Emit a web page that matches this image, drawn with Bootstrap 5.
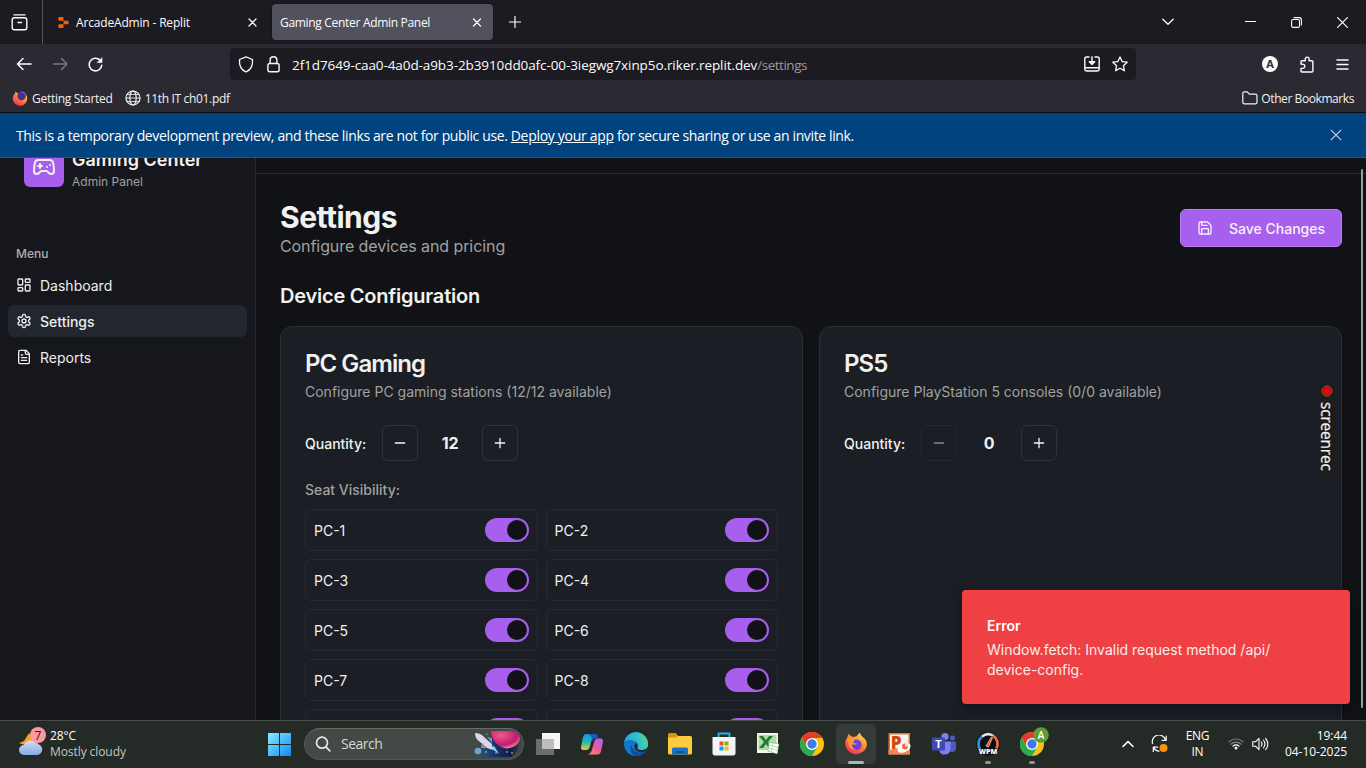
<!DOCTYPE html>
<html lang="en">
<head>
<meta charset="utf-8">
<meta name="viewport" content="width=device-width, initial-scale=1">
<title>Gaming Center Admin Panel</title>
<link href="https://cdn.jsdelivr.net/npm/bootstrap@5.3.0/dist/css/bootstrap.min.css" rel="stylesheet">
<style>
  html, body { height: 100%; overflow: hidden; }
  body { font: 14px/20px Inter, sans-serif; color: #f1f1ef; background: #111216; }
  svg { flex-shrink: 0; display: block; }
  .sys { font-family: "Open Sans", sans-serif; }
  .stroke { fill: none; stroke: currentColor; stroke-linecap: round; stroke-linejoin: round; }
  .baseline-low { padding-top: 2px; }

  /* browser window */
  .titlebar { height: 44px; background: #1c1b22; color: #fbfbfe; font-size: 12px; }
  .tab-manager { width: 43px; height: 44px; border-right: 1px solid #55545c; padding-left: 11px; }
  .win-tab { height: 36px; border-radius: 4px; }
  .win-tab.current { width: 221px; background: #52525e; padding: 0 11px 0 8px; box-shadow: 0 0 3px rgba(0,0,0,.5); }
  .win-tab.other { width: 214px; padding-left: 15px; }
  .toolbar { height: 40px; background: #2b2a33; color: #fbfbfe; }
  .urlbar { width: 906px; height: 32px; background: #1c1b22; border-radius: 4px; font-size: 13.5px; letter-spacing: -.09px; padding: 0 8px; }
  .bookmarks { height: 29px; background: #2b2a33; border-bottom: 1px solid #0c0c0d; font-size: 12px; padding: 0 12px; letter-spacing: -.28px; }
  .account { width: 16px; height: 16px; background: #fbfbfe; color: #2b2a33; font: 700 11px/16px "Open Sans", sans-serif; }

  /* preview notice */
  .notice { height: 45px; background: #00437f; border-bottom: 1px solid #1c5a94; font-size: 14px; letter-spacing: -.37px; padding: 0 24px 0 16px; color: #fff; }

  /* application */
  .app-view { height: 562px; overflow: hidden; }
  .side { width: 256px; background: #16171c; border-right: 1px solid #27292e; }
  .brand { padding: 0 24px; margin-top: -13px; height: 44px; gap: 8px; }
  .brand-logo { width: 40px; height: 40px; border-radius: 6px; background: #a75fee; }
  .brand-name { font-size: 18px; line-height: 28px; font-weight: 600; }
  .soft { color: #a1a19f; }
  .menu-label { font-size: 12px; font-weight: 500; margin: 48px 0 0 8px; height: 32px; padding: 2px 8px 0; color: #aeaeac; }
  .side-link { height: 32px; padding: 0 8px; border-radius: 6px; gap: 8px; color: #eeeeec; }
  .side-link:hover { background: #1d2026; }
  .side-link.current { background: #22262e; font-weight: 500; }
  .page-top { height: 16px; border-bottom: 1px solid #27292e; }
  .page-body { padding: 24px; width: 1110px; }
  .page-title { font-size: 30px; line-height: 34px; font-weight: 700; letter-spacing: -.5px; margin: 0; padding-top: 2px; }
  .page-sub { font-size: 16px; line-height: 24px; letter-spacing: -.08px; }
  .btn-save { width: 162px; height: 38px; border: 1px solid #b97ff1; border-radius: 6px; background: #a75fee; color: #f7f1fd; font-size: 14px; font-weight: 500; padding: 0 16px; gap: 16px; }
  .btn-save:hover { background: #b070f0; color: #fff; }
  .section-title { font-size: 20px; line-height: 28px; font-weight: 600; letter-spacing: -.22px; margin: 24px 0 16px; }
  .device { height: 640px; padding: 24px; border: 1px solid #2b2e35; border-radius: 12px; background: #1b1e25; color: #f1f1ef; }
  .device-title { font-size: 24px; line-height: 24px; font-weight: 600; letter-spacing: -.95px; margin: 1px 0 6px; }
  .qty { height: 36px; margin-top: 23px; gap: 16px; font-weight: 500; }
  .qty b { width: 32px; text-align: center; font-size: 16px; }
  .btn-step { width: 36px; height: 36px; padding: 0; border: 1px solid #2f3237; border-radius: 6px; color: #f1f1ef; }
  .btn-step:disabled { opacity: .5; border-color: #2f3237; color: #f1f1ef; }
  .seats-label { line-height: 24px; margin: 17px 0 7px; font-weight: 500; }
  .seats { display: grid; grid-template-columns: 1fr 1fr; gap: 8px; }
  .seat { height: 42px; padding: 0 8px; border: 1px solid #272a30; border-radius: 6px; }
  .toggle { width: 44px; height: 24px; padding: 2px; border-radius: 12px; background: #a75fee; display: flex; justify-content: flex-end; margin-left: auto; }
  .toggle::after { content: ""; width: 20px; height: 20px; border-radius: 50%; background: #111216; }
  .fail-toast { right: 16px; bottom: 64px; width: 388px; height: 114px; padding: 26px 25px 24px; border-radius: 4px; background: #ef4143; color: #fdeaea; box-shadow: 0 6px 14px rgba(0,0,0,.35); }
  .recorder { left: 1318px; top: 384px; width: 17px; height: 90px; background: #1c1c1c; padding-top: 1px; }
  .recorder span { writing-mode: vertical-rl; font: 400 15.500px/16px "Open Sans", sans-serif; letter-spacing: -.2px; margin-top: 5px; -webkit-text-stroke: .2px currentColor; }
  .thumb { left: 1361px; top: 169px; width: 2px; height: 539px; background: #9b9c9e; border-radius: 1px; }

  /* taskbar */
  .taskbar { height: 48px; background: #242a26; border-top: 1px solid #474b47; padding-bottom: 2px; font-size: 12px; line-height: 16px; color: #fff; }
  .weather { width: 257px; padding-left: 18px; gap: 4px; letter-spacing: -.08px; }
  .search-pill { width: 220px; height: 32px; margin: 0 2px 0 3px; border-radius: 16px; background: #434944; border: 1px solid #535853; border-top-color: #666b66; font-size: 14px; letter-spacing: -.5px; color: #d5d8d5; padding-left: 10px; overflow: hidden; }
  .task { width: 44px; height: 40px; display: flex; align-items: center; justify-content: center; position: relative; }
  .task.open::after { content: ""; position: absolute; bottom: 0; width: 6px; height: 3px; border-radius: 2px; background: #8f9490; }
  .task.focus { width: 40px; margin: 0 2px; border-radius: 4px; background: #353b37; }
  .task.focus::after { content: ""; position: absolute; bottom: 0; width: 16px; height: 3px; border-radius: 2px; background: #a9b9ac; }
  .tray { padding-right: 19px; }
</style>
</head>
<body class="d-flex flex-column">

<header class="sys flex-shrink-0">
  <div class="titlebar d-flex align-items-center">
    <div class="tab-manager d-flex align-items-center">
      <svg class="stroke" width="17" height="17" viewBox="0 0 17 17" stroke-width="1.4"><path d="M3 .9h11"/><rect x="1.200" y="3.8" width="14.600" height="12" rx="2.2"/><path d="M7 8.500h3.500"/></svg>
    </div>
    <div class="win-tab other d-flex align-items-center me-3">
      <svg width="11" height="13" viewBox="0 0 12 14" fill="#f26207"><path d="M1.2 1h3.6Q6 1 6 2.200V5H1.200Q.4 5 .4 4V2Q.4 1 1.200 1zM6 5h4.500q1 0 1 1v2q0 1-1 1H6zM1.200 9H6v3q0 1-1 1H1.200Q.4 13 .4 12v-2Q.4 9 1.200 9z"/></svg>
      <span class="flex-grow-1 baseline-low" style="margin-left:7px;letter-spacing:-.17px">ArcadeAdmin - Replit</span>
      <svg class="stroke" width="9" height="9" viewBox="0 0 9 9" stroke-width="1.3"><path d="M1 1l7 7M8 1L1 8"/></svg>
    </div>
    <div class="win-tab current d-flex align-items-center" style="margin-left:-1px">
      <span class="flex-grow-1 baseline-low" style="letter-spacing:-.31px">Gaming Center Admin Panel</span>
      <svg class="stroke" width="10" height="9" viewBox="0 0 9 9" stroke-width="1.3"><path d="M1 1l7 7M8 1L1 8"/></svg>
    </div>
    <svg class="stroke" style="margin-left:16px" width="12" height="12" viewBox="0 0 12 12" stroke-width="1.2"><path d="M6 .5v11M.5 6h11"/></svg>
    <div class="d-flex align-items-center ms-auto">
      <svg class="stroke" style="margin-right:71px" width="12" height="8" viewBox="0 0 12 8" stroke-width="1.3"><path d="M.8 1.200L6 6.300l5.200-5.100"/></svg>
      <svg style="margin-right:35px" width="11" height="11" viewBox="0 0 11 11"><path d="M0 4h11v1H0z" fill="#fff"/></svg>
      <svg class="stroke" style="margin-right:35px" width="11" height="11" viewBox="0 0 11 11" stroke-width="1.100"><rect x=".6" y="2.500" width="7.900" height="7.900" rx="1.500"/><path d="M3 .6h5.200q2.200 0 2.200 2.200V8"/></svg>
      <svg class="stroke" style="margin-right:18px" width="11" height="11" viewBox="0 0 11 11" stroke-width="1.200"><path d="M.6.6l9.800 9.800M10.400.6L.6 10.400"/></svg>
    </div>
  </div>

  <div class="toolbar d-flex align-items-center">
    <svg class="stroke" style="margin-left:16px" width="16" height="14" viewBox="0 0 16 14" stroke-width="1.500"><path d="M15 7H1.500M7 1.500L1.500 7 7 12.500"/></svg>
    <svg class="stroke" style="margin-left:21px;color:#77767e" width="15" height="14" viewBox="0 0 15 14" stroke-width="1.500"><path d="M.5 7H14M8.500 1.500L14 7l-5.500 5.500"/></svg>
    <svg class="stroke" style="margin-left:20px" width="15" height="15" viewBox="0 0 15 15" stroke-width="1.500"><path d="M13.800 8.200A6.300 6.300 0 1 1 12 3.100"/><path d="M14 1v4.600H9.400z" fill="currentColor" stroke-width=".6"/></svg>
    <div class="urlbar d-flex align-items-center" style="margin-left:127px">
      <svg class="stroke" width="16" height="17" viewBox="0 0 16 17" stroke-width="1.300"><path d="M8 .9l6.500 2.600c.4 5-1.600 10.300-6.500 12.500C3.100 13.800 1.100 8.500 1.500 3.500z"/></svg>
      <svg class="stroke" style="margin-left:13px" width="13" height="17" viewBox="0 0 13 17" stroke-width="1.400"><rect x=".9" y="7.500" width="11.200" height="8.300" rx="1.800"/><path d="M3.100 7.300V4.200a3.400 3.400 0 0 1 6.800 0v3.100"/></svg>
      <span class="flex-grow-1 baseline-low" style="margin-left:12px">2f1d7649-caa0-4a0d-a9b3-2b3910dd0afc-00-3iegwg7xinp5o.riker.replit.dev<span style="color:#9b9aa1;letter-spacing:-.48px">/settings</span></span>
      <svg class="stroke" style="margin-right:12px" width="16" height="16" viewBox="0 0 16 16" stroke-width="1.400"><path d="M5 1H2.500Q.8 1 .8 2.700v10.600Q.8 15 2.500 15h11q1.700 0 1.700-1.700V2.700Q15.200 1 13.500 1H11M1 11.800h14"/><path d="M8 .7v7.500M5.300 5.800L8 8.500l2.700-2.700z"/></svg>
      <svg class="stroke" width="16" height="16" viewBox="0 0 16 16" stroke-width="1.300"><path d="M8 .9l2.100 4.700 5.100.6-3.800 3.500 1 5.100L8 12.300l-4.400 2.500 1-5.100L.8 6.200l5.100-.6z"/></svg>
    </div>
    <div class="d-flex align-items-center ms-auto" style="margin-right:17px;gap:21px">
      <div class="account rounded-circle text-center">A</div>
      <svg class="stroke" width="16" height="17" viewBox="0 0 16 17" stroke-width="1.400"><path d="M2 8V5.600q0-.9.900-.9h3.400V3a1.700 1.700 0 0 1 3.800 0v1.700h2.700q1.100 0 1.100 1.100v9.100q0 1.100-1.100 1.100H2.900Q2 16 2 15v-2.600h1.700a1.900 1.900 0 0 0 0-4.200z"/></svg>
      <svg class="stroke" width="13" height="13" viewBox="0 0 13 13" stroke-width="1.400"><path d="M1 2h11M1 6.500h11M1 11h11"/></svg>
    </div>
  </div>

  <div class="bookmarks d-flex align-items-center">
    <svg width="16" height="16" viewBox="0 0 16 16"><defs><linearGradient id="ff" x1=".8" y1="0" x2=".2" y2="1"><stop offset="0" stop-color="#ffe14d"/><stop offset=".45" stop-color="#ff8a2b"/><stop offset="1" stop-color="#f0246a"/></linearGradient></defs><path d="M3.600 1.200Q4.500 3 6 3.200L13 3.500q2.300 2 2.200 5.200A7.200 7.200 0 1 1 1.500 5.500Q3 4 3.600 1.200z" fill="url(#ff)"/><circle cx="9.600" cy="6" r="4.200" fill="#43308f"/><path d="M8 1.500q5-.8 6.200 4-2-2.500-6.200-4z" fill="#9059ff"/></svg>
    <span class="baseline-low" style="margin-left:4px">Getting Started</span>
    <svg class="stroke" style="margin-left:12px" width="16" height="16" viewBox="0 0 16 16" stroke-width="1.200"><circle cx="8" cy="8" r="7"/><ellipse cx="8" cy="8" rx="3.200" ry="7"/><path d="M1 8h14M2 4.400h12M2 11.600h12" stroke-width=".9"/></svg>
    <span class="baseline-low" style="margin-left:4px;letter-spacing:-.33px">11th IT ch01.pdf</span>
    <svg class="stroke ms-auto" width="16" height="14" viewBox="0 0 16 14" stroke-width="1.200"><path d="M.8 11.200V2.500Q.8.900 2.400.9h2.900l2 2.200h6q1.700 0 1.700 1.700v6.400q0 1.700-1.700 1.700H2.500Q.8 12.900.8 11.200z"/></svg>
    <span class="baseline-low" style="margin-left:3px;letter-spacing:-.42px">Other Bookmarks</span>
  </div>
</header>

<div class="notice sys d-flex align-items-center justify-content-between flex-shrink-0">
  <span class="baseline-low">This is a temporary development preview, and these links are not for public use. <a href="#" class="text-white text-decoration-underline" style="letter-spacing:-.3px">Deploy your app</a> for secure sharing or use an invite link.</span>
  <svg class="stroke" width="12" height="12" viewBox="0 0 12 12" stroke-width="1.200" style="color:#c5d5e5"><path d="M1.300 1.300l9.400 9.400M10.700 1.300l-9.400 9.400"/></svg>
</div>

<div class="app-view d-flex flex-shrink-0">
  <aside class="side flex-shrink-0">
    <div class="brand d-flex align-items-center">
      <div class="brand-logo d-flex align-items-center justify-content-center">
        <svg class="stroke" width="24" height="24" viewBox="0 0 24 24" stroke-width="2"><path d="M6 11h4M8 9v4M15 12h.01M18 10h.01"/><path d="M17.320 5H6.680a4 4 0 0 0-3.978 3.590C2.604 9.416 2 14.456 2 16a3 3 0 0 0 3 3c1 0 1.500-.5 2-1l1.414-1.414A2 2 0 0 1 9.828 16h4.344a2 2 0 0 1 1.414.586L17 18c.5.5 1 1 2 1a3 3 0 0 0 3-3c0-1.545-.604-6.584-.685-7.258A4 4 0 0 0 17.320 5z"/></svg>
      </div>
      <div class="baseline-low">
        <div class="brand-name">Gaming Center</div>
        <div class="soft" style="font-size:12px;line-height:16px">Admin Panel</div>
      </div>
    </div>
    <div class="menu-label d-flex align-items-center">Menu</div>
    <nav class="nav flex-column flex-nowrap px-2 gap-1">
      <a href="#" class="side-link d-flex align-items-center text-decoration-none"><svg class="stroke" width="16" height="16" viewBox="0 0 24 24" stroke-width="2"><rect x="3" y="3" width="7" height="9" rx="1"/><rect x="14" y="3" width="7" height="5" rx="1"/><rect x="14" y="12" width="7" height="9" rx="1"/><rect x="3" y="16" width="7" height="5" rx="1"/></svg><span class="baseline-low">Dashboard</span></a>
      <a href="#" class="side-link current d-flex align-items-center text-decoration-none"><svg class="stroke" width="16" height="16" viewBox="0 0 24 24" stroke-width="2"><path d="M12.220 2h-.44a2 2 0 0 0-2 2v.18a2 2 0 0 1-1 1.730l-.43.25a2 2 0 0 1-2 0l-.15-.08a2 2 0 0 0-2.730.73l-.22.38a2 2 0 0 0 .73 2.730l.15.1a2 2 0 0 1 1 1.720v.51a2 2 0 0 1-1 1.740l-.15.09a2 2 0 0 0-.73 2.730l.22.38a2 2 0 0 0 2.730.73l.15-.08a2 2 0 0 1 2 0l.43.25a2 2 0 0 1 1 1.730V20a2 2 0 0 0 2 2h.44a2 2 0 0 0 2-2v-.18a2 2 0 0 1 1-1.730l.43-.25a2 2 0 0 1 2 0l.15.08a2 2 0 0 0 2.730-.73l.22-.39a2 2 0 0 0-.73-2.730l-.15-.08a2 2 0 0 1-1-1.740v-.5a2 2 0 0 1 1-1.740l.15-.09a2 2 0 0 0 .73-2.730l-.22-.38a2 2 0 0 0-2.730-.73l-.15.08a2 2 0 0 1-2 0l-.43-.25a2 2 0 0 1-1-1.730V4a2 2 0 0 0-2-2z"/><circle cx="12" cy="12" r="3"/></svg><span class="baseline-low">Settings</span></a>
      <a href="#" class="side-link d-flex align-items-center text-decoration-none"><svg class="stroke" width="16" height="16" viewBox="0 0 24 24" stroke-width="2"><path d="M15 2H6a2 2 0 0 0-2 2v16a2 2 0 0 0 2 2h12a2 2 0 0 0 2-2V7z"/><path d="M14 2v4a2 2 0 0 0 2 2h4M10 9H8M16 13H8M16 17H8"/></svg><span class="baseline-low">Reports</span></a>
    </nav>
  </aside>

  <main class="flex-grow-1">
    <div class="page-top"></div>
    <div class="page-body">
      <div class="d-flex align-items-center justify-content-between">
        <div>
          <h1 class="page-title">Settings</h1>
          <div class="page-sub soft">Configure devices and pricing</div>
        </div>
        <button class="btn btn-save d-flex align-items-center"><svg class="stroke" width="16" height="16" viewBox="0 0 24 24" stroke-width="2"><path d="M15.200 3a2 2 0 0 1 1.400.6l3.800 3.800a2 2 0 0 1 .6 1.400V19a2 2 0 0 1-2 2H5a2 2 0 0 1-2-2V5a2 2 0 0 1 2-2z"/><path d="M17 21v-7a1 1 0 0 0-1-1H8a1 1 0 0 0-1 1v7M7 3v4a1 1 0 0 0 1 1h7"/></svg>Save Changes</button>
      </div>
      <h2 class="section-title">Device Configuration</h2>
      <div class="row gx-3">
        <div class="col-6">
          <div class="card device">
            <h3 class="device-title">PC Gaming</h3>
            <div class="soft">Configure PC gaming stations (12/12 available)</div>
            <div class="qty d-flex align-items-center">
              <span class="baseline-low">Quantity:</span>
              <button class="btn btn-step d-flex align-items-center justify-content-center"><svg class="stroke" width="16" height="16" viewBox="0 0 24 24" stroke-width="2"><path d="M5 12h14"/></svg></button>
              <b>12</b>
              <button class="btn btn-step d-flex align-items-center justify-content-center"><svg class="stroke" width="16" height="16" viewBox="0 0 24 24" stroke-width="2"><path d="M5 12h14M12 5v14"/></svg></button>
            </div>
            <div class="seats-label soft">Seat Visibility:</div>
            <div class="seats" id="seats"></div>
          </div>
        </div>
        <div class="col-6">
          <div class="card device">
            <h3 class="device-title">PS5</h3>
            <div class="soft">Configure PlayStation 5 consoles (0/0 available)</div>
            <div class="qty d-flex align-items-center">
              <span class="baseline-low">Quantity:</span>
              <button class="btn btn-step d-flex align-items-center justify-content-center" disabled><svg class="stroke" width="16" height="16" viewBox="0 0 24 24" stroke-width="2"><path d="M5 12h14"/></svg></button>
              <b>0</b>
              <button class="btn btn-step d-flex align-items-center justify-content-center"><svg class="stroke" width="16" height="16" viewBox="0 0 24 24" stroke-width="2"><path d="M5 12h14M12 5v14"/></svg></button>
            </div>
          </div>
        </div>
      </div>
    </div>
  </main>
</div>

<div class="thumb position-absolute"></div>
<div class="recorder position-absolute d-flex flex-column align-items-center">
  <svg width="12" height="12" viewBox="0 0 12 12"><circle cx="6" cy="6" r="5" fill="none" stroke="#e05050" stroke-width=".9"/><circle cx="6" cy="6" r="3.800" fill="#f00"/></svg>
  <span>screenrec</span>
</div>
<div class="fail-toast position-absolute" role="alert">
  <div class="text-white mb-1" style="font-weight:600">Error</div>
  <div>Window.fetch: Invalid request method /api/<br>device-config.</div>
</div>

<footer class="taskbar sys d-flex align-items-center flex-shrink-0 position-relative">
  <div class="weather d-flex align-items-center">
    <svg width="28" height="32" viewBox="0 0 28 32" style="margin-top:-3px"><defs><linearGradient id="cl" x2="0" y2="1"><stop offset="0" stop-color="#cfe0fa"/><stop offset="1" stop-color="#86a9e4"/></linearGradient></defs><path d="M11 7l3 5 7 2-2 8H6l1-3-6-2 5-2z" fill="#f8a521"/><path d="M6 29a5 5 0 0 1 0-10A7 7 0 0 1 18.500 18 5.500 5.500 0 0 1 19 29z" fill="url(#cl)"/><circle cx="20" cy="9" r="8" fill="#ff97a1"/><text x="20" y="13.500" font-size="12" text-anchor="middle" fill="#2a1a1c">7</text></svg>
    <div><div>28°C</div><div style="color:#c3c6c3">Mostly cloudy</div></div>
  </div>
  <div class="task"><svg width="24" height="24" viewBox="0 0 24 24"><defs><linearGradient id="wi" x2="1" y2="1"><stop offset="0" stop-color="#86ecff"/><stop offset="1" stop-color="#0d8cf0"/></linearGradient></defs><path d="M1 1h11v11H1zM13 1h11v11H13zM1 13h11v11H1zM13 13h11v11H13z" fill="url(#wi)"/></svg></div>
  <div class="search-pill d-flex align-items-center">
    <svg class="stroke" width="16" height="16" viewBox="0 0 16 16" stroke-width="1.700" style="color:#e4e7e4"><circle cx="7" cy="6.700" r="5.500"/><path d="M11 10.800l3.800 4"/></svg>
    <span style="margin-left:10px">Search</span>
    <svg class="ms-auto" width="50" height="30" viewBox="0 0 50 30"><defs><linearGradient id="sp" x2="1"><stop offset="0" stop-color="#1d5a8c" stop-opacity="0"/><stop offset=".35" stop-color="#173d77"/><stop offset=".8" stop-color="#101c44"/><stop offset="1" stop-color="#343b48"/></linearGradient><radialGradient id="pl" cx=".35" cy=".25" r=".8"><stop offset="0" stop-color="#ef5b84"/><stop offset=".7" stop-color="#c2187b"/><stop offset="1" stop-color="#ff9d86"/></radialGradient></defs><path d="M4 15Q14 8 26 6h14q6 4 6 9 0 8-8 13H6Q1 24 4 15z" fill="url(#sp)"/><path d="M18 2h22q6 1 7 8-3 9-14 9.500Q19 16 18 2z" fill="url(#pl)"/><path d="M2 4q6 0 10 5l7 6 1 6-6-2-7-6Q2 10 2 4z" fill="#d9d6e6"/><path d="M9 14l-1 5 6 0zM14 8l5 1v5z" fill="#8f8ba9"/><path d="M18 19l3-2 5 8z" fill="#8fd8ff"/><circle cx="5" cy="22" r="3.300" fill="#6da5c9"/><g fill="#ffd9c0"><circle cx="13" cy="23" r=".8"/><circle cx="34" cy="23" r=".8"/><circle cx="39" cy="24" r=".8"/><circle cx="14" cy="5" r=".6"/><circle cx="23" cy="24" r=".7"/></g></svg>
  </div>
  <div class="task"><svg width="24" height="24" viewBox="0 0 24 24"><path d="M6 1h18v16H6z" fill="#f4f4f4"/><path d="M0 7h18v16H0z" fill="#6b6e6c"/><path d="M6 7h12v10H6z" fill="#bcbebd"/></svg></div>
  <div class="task"><svg width="24" height="24" viewBox="0 0 24 24"><defs><linearGradient id="ca" x2="0" y2="1"><stop offset="0" stop-color="#1597ee"/><stop offset=".5" stop-color="#26b5b0"/><stop offset="1" stop-color="#f4c93a"/></linearGradient><linearGradient id="cb" x1="1" x2="0" y2="1"><stop offset="0" stop-color="#a06cf5"/><stop offset=".55" stop-color="#f2559a"/><stop offset="1" stop-color="#ffa04f"/></linearGradient></defs><path d="M6 2h10q-3 1-4 5l-2 7q-1 4-4 4H3.500Q.2 18 1.200 14L3 5q.8-3 3-3z" fill="url(#ca)"/><path d="M18 22.500H8q3-1 4-5l2-7q1-4 4-4h2.500q3.300 0 2.300 4L21 19.500q-.8 3-3 3z" fill="url(#cb)"/><path d="M8 2h8q1.500 0 2 4.500h-3Q13 7 12 9q.5-5-4-7z" fill="#1f54c4"/></svg></div>
  <div class="task"><svg width="24" height="24" viewBox="0 0 24 24"><defs><linearGradient id="ea" x2="1" y1=".3" y2="0"><stop offset="0" stop-color="#26a7e8"/><stop offset=".6" stop-color="#33c6c4"/><stop offset="1" stop-color="#70e14a"/></linearGradient></defs><circle cx="12" cy="12" r="12" fill="#1276c9"/><path d="M.3 9.500A12 12 0 0 1 24 12c0 4-3 6-6.500 6-3 0-4.500-1.200-4-2.200 1.500-2 1-5.300-2.500-6.600Q5 6.500.3 9.500z" fill="url(#ea)"/><path d="M9 10.500c-3 3 0 9.500 6 10 3 .2 5.500-.8 7-2A12 12 0 0 1 12 24C6 23 5 15 9 10.500z" fill="#0d4e9c"/><path d="M13.500 15.800c-.5 1 1 2.200 4 2.200 2 0 4-.6 5.200-2l-.8 3c-6 3-11.500 0-11.500-4.500 0-2 1-3 2-3.500q2 2.300 1.100 4.800z" fill="#242a26"/></svg></div>
  <div class="task"><svg width="24" height="22" viewBox="0 0 24 22"><path d="M0 1.500Q0 0 1.500 0h6L10 2.500 9 6H0z" fill="#d8930f"/><path d="M0 4.500h8L10 3h12.500Q24 3 24 4.500V20q0 1.500-1.500 1.500h-21Q0 21.500 0 20z" fill="#fecb3f"/><path d="M4 21.500V16q0-1.500 1.500-1.500h13Q20 14.500 20 16v5.500z" fill="#1673c5"/><path d="M8 18h8v2H8z" fill="#0d5296"/></svg></div>
  <div class="task"><svg width="24" height="24" viewBox="0 0 24 24"><path d="M6.500 6V1.500h11V6" fill="none" stroke="#29b3ed" stroke-width="1.800"/><path d="M.5 5h23v16q0 2.500-2.500 2.500H3Q.5 23.500.5 21z" fill="#f3f4f5"/><path d="M7.500 9.500h4v4h-4z" fill="#f25022"/><path d="M12.500 9.500h4v4h-4z" fill="#7fba00"/><path d="M7.500 14.500h4v4h-4z" fill="#00a4ef"/><path d="M12.500 14.500h4v4h-4z" fill="#ffb900"/></svg></div>
  <div class="task"><svg width="24" height="24" viewBox="0 0 24 24"><path d="M1 2q0-1 1-1h20v20H1z" fill="#f2f7ee"/><path d="M2.500 3h18v15h-18z" fill="#b4dba3"/><path d="M3 4h4l3 4 3-4h4l-5 6 5 6h-4l-3-4-3 4H3l5-6z" fill="#1c7c35"/><path d="M13 10l10 2-2 10-9-3z" fill="#fff" stroke="#5caa6a" stroke-width=".6"/><path d="M13 13l9 2.500M12.500 16l8.500 2.500M17 11l-2 9" stroke="#8cc496" stroke-width=".6"/></svg></div>
  <div class="task"><svg width="24" height="24" viewBox="0 0 24 24"><g id="chrome"><circle cx="12" cy="12" r="12" fill="#fbc116"/><path d="M1.600 6A12 12 0 0 1 22.400 6H12l-5 9z" fill="#e33b2e"/><path d="M1.600 6A12 12 0 0 0 12 24l5.200-9-10.400 0z" fill="#2da94f"/><circle cx="12" cy="12" r="6" fill="#fff"/><circle cx="12" cy="12" r="4.700" fill="#3a7cec"/></g></svg></div>
  <div class="task focus"><svg width="24" height="24" viewBox="0 0 16 16"><path d="M3.200 1.200Q4.500 3.300 6 3.300L8 3Q9.500 2 10.500.4q.5 2 2 3Q15.500 5.500 15.200 9A7.200 7.200 0 1 1 1 6Q2 4 3.200 1.200z" fill="url(#ff)"/><circle cx="8.200" cy="8.500" r="3.500" fill="#6d42d8"/><path d="M2 4.500l5 .8-1 2 3 .5Q7 9 5.500 8q-.5 3 2.500 4-4 0-4.800-3z" fill="#ff9b30"/></svg></div>
  <div class="task"><svg width="24" height="24" viewBox="0 0 24 24"><path d="M.5 1H22v21.500H.5z" fill="#e8733f"/><path d="M2 2.500h18.500V19H2z" fill="#fdf1ea"/><path d="M.5 18l10-2 11.500 3v3.500H.5z" fill="#ef8759"/><text x="8" y="16.500" font-family="Open Sans" font-weight="800" font-size="17" text-anchor="middle" fill="#d04a10">P</text><ellipse cx="16" cy="16" rx="7" ry="4" fill="#fff" transform="rotate(-25 16 16)"/><circle cx="17" cy="14.500" r="3" fill="#ec6b36"/><path d="M17 14.500v-3a3 3 0 0 1 3 3z" fill="#fbd9c8"/></svg></div>
  <div class="task"><svg width="24" height="24" viewBox="0 0 24 24"><circle cx="13" cy="4.500" r="3.600" fill="#7b83eb"/><circle cx="20.500" cy="6" r="2.500" fill="#5059c9"/><path d="M17 9.500h7v6.500q0 4-4 4-3 0-3-4z" fill="#5059c9"/><path d="M7 9.500h11.500v7q0 6-6 6-5.500 0-5.500-6z" fill="#7b83eb"/><path d="M1.200 5.500h10.600q1.200 0 1.200 1.200v10.600q0 1.200-1.200 1.200H1.200Q0 18.500 0 17.300V6.700Q0 5.500 1.200 5.500z" fill="#4049b5"/><text x="6.500" y="15.800" font-family="Open Sans" font-weight="700" font-size="11" text-anchor="middle" fill="#fff">T</text></svg></div>
  <div class="task open"><svg width="24" height="24" viewBox="0 0 24 24"><circle cx="12" cy="12" r="11.800" fill="#0d0f12"/><path d="M4 17.500A10 10 0 0 1 6 4.500" fill="none" stroke="#2b8fda" stroke-width="2.800"/><path d="M6 4.500A10 10 0 0 1 17 3.500" fill="none" stroke="#dfe5ea" stroke-width="2.500"/><path d="M17 3.500a10 10 0 0 1 3.500 13" fill="none" stroke="#ef6a3f" stroke-width="2.800"/><path d="M15.500 5l1 .7-3.800 9q-2 .8-2.700-1z" fill="#f04a2b" stroke="#fff" stroke-width=".6"/><text x="12" y="21.500" font-family="Open Sans" font-weight="800" font-size="7" text-anchor="middle" fill="#fff">WPM</text></svg></div>
  <div class="task open"><svg style="margin:-5px -5px 0 0" width="29" height="29" viewBox="0 -5 29 29"><use href="#chrome"/><circle cx="21" cy="3" r="7.800" fill="#5f9d36"/><text x="21" y="6.500" font-family="Open Sans" font-size="10" font-weight="600" text-anchor="middle" fill="#fff">A</text></svg></div>

  <div class="tray d-flex align-items-center ms-auto">
    <svg class="stroke" width="12" height="8" viewBox="0 0 12 8" stroke-width="1.600"><path d="M1 6.500L6 1.500l5 5"/></svg>
    <svg class="stroke" style="margin-left:17px" width="18" height="18" viewBox="0 0 18 18" stroke-width="1.200"><path d="M1.500 8.500A6.700 6.700 0 0 1 14.500 5M15.200 1v4.300H11M2.300 16.500v-4.300h4.200M2.500 12.400Q4.500 16 8 16.200"/><circle cx="12.500" cy="13" r="4" fill="#f7930d" stroke="none"/></svg>
    <div class="text-center" style="margin-left:17px;letter-spacing:-.4px">ENG<br>IN</div>
    <svg class="stroke" style="margin-left:19px" width="16" height="13" viewBox="0 0 16 13" stroke-width="1.200"><path d="M.8 5a10.200 10.200 0 0 1 14.400 0" opacity=".35"/><path d="M3 7.200a7 7 0 0 1 10 0" opacity=".45"/><path d="M5 9.200a4.200 4.200 0 0 1 6 0"/><circle cx="8" cy="11" r="1.500" fill="currentColor" stroke="none"/></svg>
    <svg class="stroke" style="margin-left:8px" width="17" height="14" viewBox="0 0 17 14" stroke-width="1.100"><path d="M.8 4.800h2.700L7 1.300v11.400L3.500 9.200H.8zM9.300 4.800q1.400 2.200 0 4.400M11.500 3q2.800 4 0 8M13.700 1.300q4.300 5.700 0 11.400"/></svg>
    <div class="text-end" style="margin-left:16px;letter-spacing:-.06px">19:44<br>04-10-2025</div>
  </div>
</footer>

<script src="https://cdn.jsdelivr.net/npm/bootstrap@5.3.0/dist/js/bootstrap.bundle.min.js"></script>
<script>
  // Labels are filled in for the seats inside the viewport; the fifth row only peeks in.
  const seats = document.getElementById('seats');
  for (let n = 1; n <= 10; n++) {
    const label = n <= 8 ? `<span class="baseline-low">PC-${n}</span>` : '';
    seats.insertAdjacentHTML('beforeend',
      `<div class="seat d-flex align-items-center">${label}<span class="toggle" role="switch" aria-checked="true"></span></div>`);
  }
</script>
</body>
</html>
